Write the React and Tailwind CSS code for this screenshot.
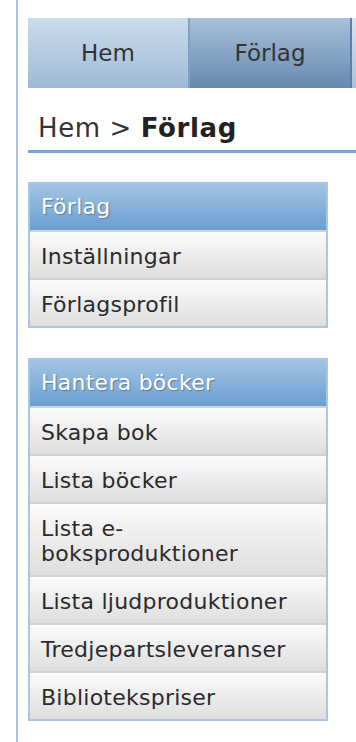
import React from 'react'

const Box = ({ title, items }) => (
    <div className="w-[300px] border-2 border-[#a9c7e3]">
        <div className="bg-gradient-to-b from-[#a3c5e5] to-[#6a9ed0] pl-[11px] py-[10px] text-[22px] leading-[26px] tracking-[0.25px] text-white [text-shadow:1px_1px_1px_#5a7894]">
            {title}
        </div>
        {items.map((item) => (
            <div
                key={item}
                className="border-t-2 border-[#d0d0d0] bg-gradient-to-b from-[#fbfbfb] to-[#dedede] pl-[11px] pr-[30px] pt-[12px] pb-[9px] text-[22px] leading-[25px] tracking-[0.25px] text-[#2b2b2b]"
            >
                {item}
            </div>
        ))}
    </div>
)

const App = () => {
    return (
        <div className="min-h-screen bg-white pl-[16px] font-['DejaVu_Sans',sans-serif]">
            <div className="min-h-[742px] border-l-2 border-[#a9c6e2] pl-[10px] pt-[18px] overflow-hidden">
                {/* Tabs */}
                <div className="flex h-[70px]">
                    <div className="w-[160px] shrink-0 flex items-center justify-center bg-gradient-to-b from-[#cbdcec] to-[#9ebad6] text-[23px] text-[#333]">
                        Hem
                    </div>
                    <div className="w-[164px] shrink-0 flex items-center justify-center border-x-2 border-l-[#7f9fc4] border-r-[#5f7fa8] bg-gradient-to-b from-[#a9c1da] to-[#6789b0] text-[23px] text-[#333]">
                        Förlag
                    </div>
                    <div className="flex-1 bg-gradient-to-b from-[#d6e4f0] to-[#a9c2dc]" />
                </div>

                {/* Breadcrumb */}
                <div className="pl-[10px] pt-[25px] pb-[7px] border-b-[3px] border-[#7ba3cf] text-[26px] leading-[30px] tracking-[0.6px] text-[#333]">
                    Hem &gt; <span className="font-bold text-[#222]">Förlag</span>
                </div>

                <div className="mt-[29px] flex flex-col gap-[30px]">
                    <Box title="Förlag" items={['Inställningar', 'Förlagsprofil']} />
                    <Box
                        title="Hantera böcker"
                        items={[
                            'Skapa bok',
                            'Lista böcker',
                            'Lista e-boksproduktioner',
                            'Lista ljudproduktioner',
                            'Tredjepartsleveranser',
                            'Bibliotekspriser',
                        ]}
                    />
                </div>
            </div>
        </div>
    )
}

export default App
